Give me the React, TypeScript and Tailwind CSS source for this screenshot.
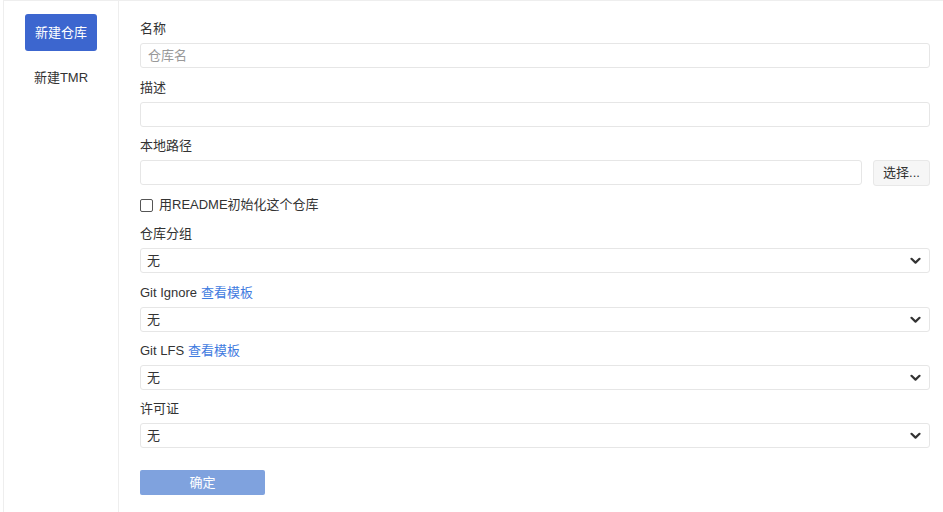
import { useState } from 'react'

const font = { fontFamily: '"Liberation Sans", "Noto Sans CJK SC", sans-serif' }

function Chevron() {
  return (
    <svg className="pointer-events-none absolute right-[9px] top-1/2 -translate-y-1/2" width="11" height="8" viewBox="0 0 11 8">
      <path d="M1.5 1.8 L5.5 5.6 L9.5 1.8" fill="none" stroke="#333" strokeWidth="2.2" strokeLinecap="round" strokeLinejoin="round" />
    </svg>
  )
}

function SelectField({ label, link, gap }: { label: string; link?: boolean; gap: string }) {
  return (
    <div className={gap}>
      <div className="mb-[5px] h-[18px] text-[13px] leading-[18px] text-[#333]">
        {label}
        {link && <a className="ml-[4px] text-[#3f7be0]" href="#">查看模板</a>}
      </div>
      <div className="relative">
        <select className="block h-[25px] w-full appearance-none rounded-[3px] border border-[#e6e6e6] bg-white pl-[6px] text-[13px] text-[#333] outline-none" style={font}>
          <option>无</option>
        </select>
        <Chevron />
      </div>
    </div>
  )
}

export default function App() {
  const [readme, setReadme] = useState(false)

  return (
    <div className="h-[512px] w-[943px] bg-white pl-[3px]" style={font}>
      <div className="flex h-full border-l border-t border-[#eeeeee]">
        <aside className="flex w-[115px] shrink-0 flex-col items-center border-r border-[#eeeeee] pt-[13px]">
          <button className="h-[37px] w-[72px] rounded-[3px] bg-[#3c66cf] text-[13px] text-white">新建仓库</button>
          <button className="mt-[18px] text-[13px] leading-[18px] text-[#333]">新建TMR</button>
        </aside>
        <main className="flex-1 pl-[21px] pr-[13px] pt-[19px]">
          <div className="mb-[11px]">
            <div className="mb-[5px] h-[18px] text-[13px] leading-[18px] text-[#333]">名称</div>
            <input
              className="block h-[25px] w-full rounded-[3px] border border-[#e6e6e6] px-[7px] text-[13px] outline-none placeholder:text-[#999]"
              placeholder="仓库名"
              style={font}
            />
          </div>
          <div className="mb-[10px]">
            <div className="mb-[5px] h-[18px] text-[13px] leading-[18px] text-[#333]">描述</div>
            <input className="block h-[25px] w-full rounded-[3px] border border-[#e6e6e6] px-[7px] text-[13px] outline-none" />
          </div>
          <div className="mb-[10px]">
            <div className="mb-[5px] h-[18px] text-[13px] leading-[18px] text-[#333]">本地路径</div>
            <div className="flex gap-[11px]">
              <input className="block h-[25px] flex-1 rounded-[3px] border border-[#e6e6e6] px-[7px] text-[13px] outline-none" />
              <button className="h-[26px] w-[57px] rounded-[3px] border border-[#e8e8e8] bg-[#f6f6f6] text-[13px] text-[#333]">选择...</button>
            </div>
          </div>
          <label className="mb-[11px] flex h-[18px] items-center text-[13px] text-[#333]">
            <span
              onClick={() => setReadme(!readme)}
              className="mr-[6px] flex h-[13px] w-[13px] items-center justify-center rounded-[2px] border border-[#555] bg-white"
            >
              {readme && <span className="h-[7px] w-[7px] bg-[#3c66cf]" />}
            </span>
            用README初始化这个仓库
          </label>
          <SelectField label="仓库分组" gap="mb-[11px]" />
          <SelectField label="Git Ignore" link gap="mb-[10px]" />
          <SelectField label="Git LFS" link gap="mb-[10px]" />
          <SelectField label="许可证" gap="mb-[22px]" />
          <button className="h-[25px] w-[125px] rounded-[2px] bg-[#7fa2de] text-[13px] text-white">确定</button>
        </main>
      </div>
    </div>
  )
}
